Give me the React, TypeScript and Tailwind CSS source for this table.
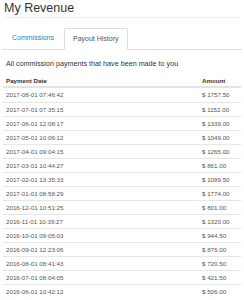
import React from "react";

const rows: [string, string][] = [
  ["2017-08-01 07:46:42", "$ 1757.50"],
  ["2017-07-01 07:35:15", "$ 1152.00"],
  ["2017-06-01 12:08:17", "$ 1339.00"],
  ["2017-05-01 10:06:12", "$ 1049.00"],
  ["2017-04-01 09:04:15", "$ 1265.00"],
  ["2017-03-01 10:44:27", "$ 861.00"],
  ["2017-02-01 13:35:33", "$ 1089.50"],
  ["2017-01-01 08:58:29", "$ 1774.00"],
  ["2016-12-01 10:51:25", "$ 801.00"],
  ["2016-11-01 10:39:27", "$ 1320.00"],
  ["2016-10-01 09:05:03", "$ 944.50"],
  ["2016-09-01 12:23:06", "$ 876.00"],
  ["2016-08-01 08:41:43", "$ 720.50"],
  ["2016-07-01 08:04:05", "$ 421.50"],
  ["2016-06-01 10:42:12", "$ 506.00"],
];

export default function App() {
  return (
    <div
      className="w-[244px] h-[300px] overflow-hidden bg-white text-[#333]"
      style={{ fontFamily: '"Liberation Sans", Arial, sans-serif' }}
    >
      <div className="px-[4px] pt-[1px]">
        <h1 className="text-[12.5px] leading-[15px] font-normal text-[#333] pb-[1px] border-b border-[#eee]">
          My Revenue
        </h1>
      </div>
      <div className="px-[2px] mt-[10px]">
        <div className="flex border-b border-[#ddd] h-[22px]">
          <div className="px-[10px] h-[21px] flex items-center text-[7px] text-[#337ab7]">
            Commissions
          </div>
          <div className="px-[8px] h-[22px] flex items-center text-[7px] text-[#555] bg-white border border-[#ddd] border-b-white rounded-t-[2px] -mb-px">
            Payout History
          </div>
        </div>
      </div>
      <div className="px-[6px] mt-[9px] text-[7.2px] leading-[9px]">
        All commission payments that have been made to you
      </div>
      <div className="px-[3px] mt-[7px] text-[6.2px]">
        <div className="flex h-[13px] items-center border-b-2 border-[#e3e3e3] font-bold">
          <div className="flex-1 pl-[3px]">Payment Date</div>
          <div className="w-[39px]">Amount</div>
        </div>
        {rows.map(([d, a], i) => (
          <div
            key={d}
            className={`flex h-[14px] items-center ${i === 0 ? "" : "border-t border-[#e6e6e6]"} text-[#555]`}
          >
            <div className="flex-1 pl-[3px]">{d}</div>
            <div className="w-[39px]">{a}</div>
          </div>
        ))}
      </div>
    </div>
  );
}
